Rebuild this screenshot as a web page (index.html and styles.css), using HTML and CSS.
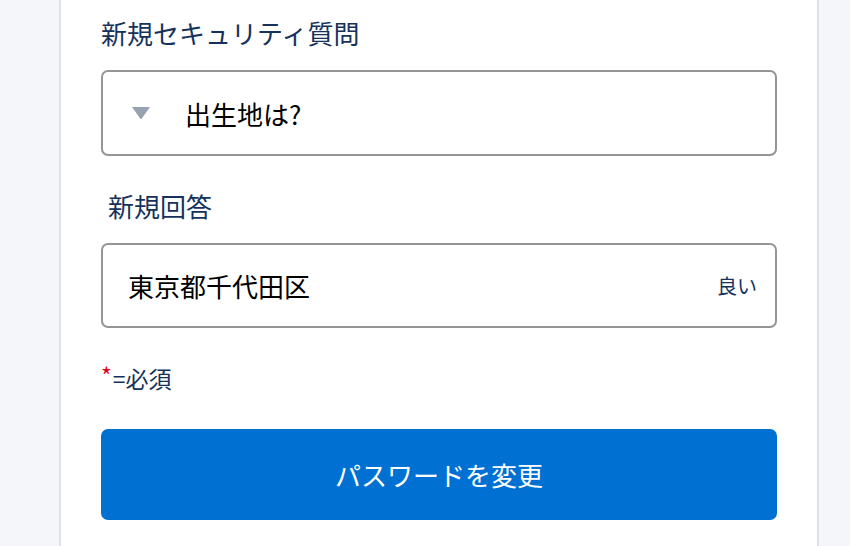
FILE: index.html
```html
<!DOCTYPE html>
<html lang="ja">
<head>
<meta charset="utf-8">
<link rel="stylesheet" href="styles.css">
</head>
<body>
<div class="panel">
  <div class="label">新規セキュリティ質問</div>
  <div class="field select">
    <svg class="caret" width="20" height="14" viewBox="0 0 20 14"><path d="M1 1 H19 L10.8 12.4 Q10 13.4 9.2 12.4 Z" fill="#97a2b0"/></svg>
    <span class="value">出生地は?</span>
  </div>
  <div class="label label2">新規回答</div>
  <div class="field input">
    <span class="value">東京都千代田区</span>
    <span class="strength">良い</span>
  </div>
  <div class="required"><span class="star">*</span>=必須</div>
  <button class="submit">パスワードを変更</button>
</div>
</body>
</html>
```

FILE: styles.css
```css
html, body {
  margin: 0;
  padding: 0;
}
body {
  background: #f4f6f9;
  font-family: "Noto Sans CJK JP", "Noto Sans", sans-serif;
  height: 546px;
  overflow: hidden;
}
.panel {
  margin-left: 59px;
  width: 676px;
  min-height: 546px;
  background: #fff;
  border-left: 2px solid #dde1e9;
  border-right: 2px solid #dde1e9;
  padding: 15px 40px 0 40px;
  box-sizing: content-box;
}
.label {
  font-size: 26px;
  line-height: 36px;
  color: #16325c;
  margin-bottom: 19px;
}
.label2 {
  margin-top: 32px;
  padding-left: 7px;
}
.field {
  box-sizing: border-box;
  height: 86px;
  border: 2px solid #959595;
  border-radius: 7px;
  display: flex;
  align-items: center;
  color: #000;
  font-size: 26px;
}
.select {
  padding-left: 28px;
}
.caret {
  display: block;
}
.select .value {
  margin-left: 34px;
}
.input {
  height: 85px;
  padding-left: 25px;
  padding-right: 18px;
}
.input .value {
  flex: 1;
}
.strength {
  font-size: 20px;
  color: #16325c;
}
.required {
  margin-top: 32px;
  font-size: 23px;
  line-height: 30px;
  color: #16325c;
}
.star {
  color: #e3001a;
  font-size: 23px;
  vertical-align: 3px;
  margin-right: 1px;
}
.submit {
  display: block;
  margin-top: 36px;
  width: 100%;
  height: 91px;
  border: 0;
  border-radius: 7px;
  background: #0070d2;
  color: #fff;
  font-family: inherit;
  font-size: 26px;
  padding: 0;
}
```
